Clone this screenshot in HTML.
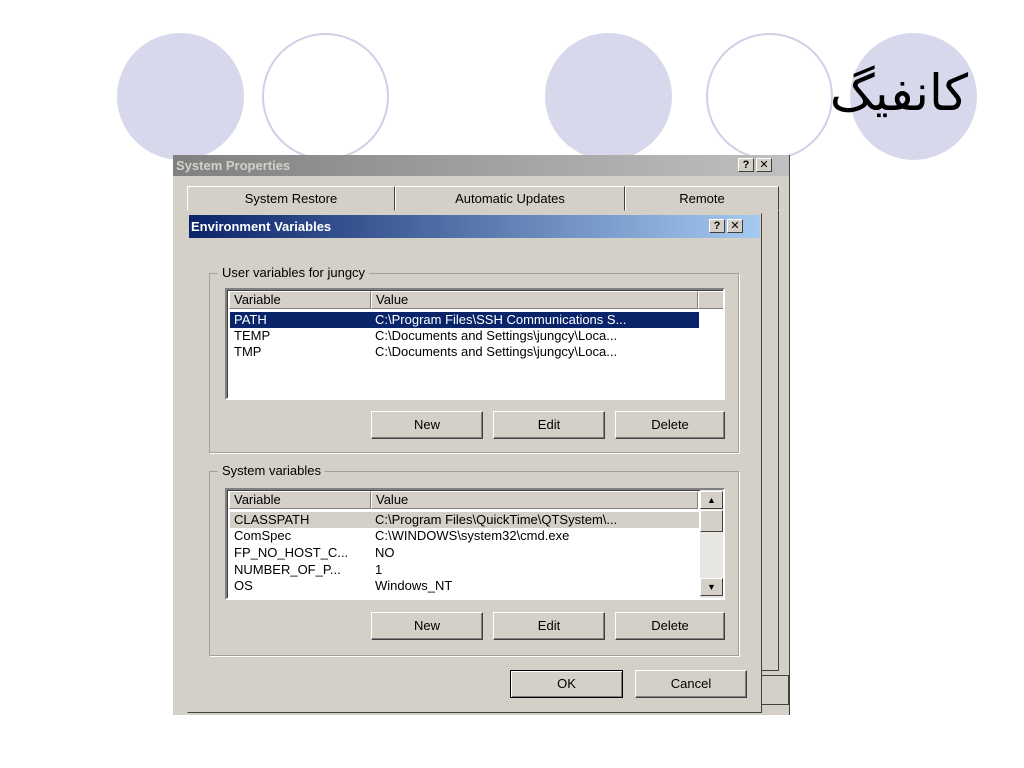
<!DOCTYPE html>
<html><head><meta charset="utf-8"><style>
*{box-sizing:border-box;margin:0;padding:0}
body{width:1024px;height:768px;background:#fff;position:relative;overflow:hidden;font-family:"Liberation Sans","DejaVu Sans",sans-serif;font-size:13px;color:#000}
.a{position:absolute}
.c{position:absolute;border-radius:50%;width:127px;height:127px;top:33px}
.f{background:#d8d8ec}
.o{border:2px solid #cfcfe6;background:#fff}
.btn{position:absolute;background:#d4d0c8;border:1px solid;border-color:#fff #404040 #404040 #fff;box-shadow:inset -1px -1px 0 #808080;text-align:center;line-height:25px;font-size:13px}
.grp{position:absolute;border:1px solid #a0a0a0;box-shadow:1px 1px 0 #fff}
.leg{position:absolute;top:-9px;left:8px;background:#d4d0c8;padding:0 4px;font-size:13px}
.list{position:absolute;background:#fff;border:2px solid;border-color:#808080 #fff #fff #808080;box-shadow:inset 1px 1px 0 #404040;overflow:hidden}
.hd{position:absolute;top:1px;height:18px;background:#d4d0c8;border:1px solid;border-color:#fff #808080 #808080 #fff;padding-left:4px;line-height:16px}
.r{position:absolute;height:16px;line-height:16px;font-size:13px;white-space:nowrap}
.tb{position:absolute;width:16px;height:14px;background:#d4d0c8;border:1px solid;border-color:#fff #404040 #404040 #fff;font-size:11px;font-weight:bold;text-align:center;line-height:12px}
</style></head><body>
<div class="c f" style="left:117px"></div>
<div class="c o" style="left:262px"></div>
<div class="c f" style="left:545px"></div>
<div class="c o" style="left:706px"></div>
<div class="c f" style="left:850px"></div>
<div class="a" style="right:56px;top:58px;font-size:50px;line-height:70px;font-family:'DejaVu Sans',sans-serif;direction:rtl">کانفیگ</div>

<!-- System Properties -->
<div class="a" style="left:173px;top:155px;width:617px;height:560px;background:#d4d0c8;border-right:1px solid #404040">
  <div class="a" style="left:0;top:0;width:616px;height:21px;background:linear-gradient(90deg,#808080,#c0c0c0);color:#d4d0c8;font-weight:bold;line-height:21px;padding-left:3px">System Properties</div>
  <div class="tb" style="left:565px;top:3px">?</div><div class="tb" style="left:583px;top:3px">✕</div>
  <div class="a" style="left:14px;top:31px;width:208px;height:25px;border:1px solid;border-color:#fff #404040 transparent #fff;text-align:center;line-height:24px">System Restore</div>
  <div class="a" style="left:222px;top:31px;width:230px;height:25px;border:1px solid;border-color:#fff #404040 transparent #fff;text-align:center;line-height:24px">Automatic Updates</div>
  <div class="a" style="left:452px;top:31px;width:154px;height:25px;border:1px solid;border-color:#fff #404040 transparent #fff;text-align:center;line-height:24px">Remote</div>
  <div class="a" style="left:588px;top:56px;width:18px;height:460px;border-right:1px solid #404040;border-bottom:1px solid #404040"></div>
  <div class="a" style="left:588px;top:520px;width:28px;height:30px;border:1px solid #404040;border-left:none"></div>
</div>

<!-- Environment Variables -->
<div class="a" style="left:187px;top:213px;width:575px;height:500px;background:#d4d0c8;border:1px solid;border-color:#d4d0c8 #404040 #404040 #d4d0c8">
  <div class="a" style="left:1px;top:1px;width:571px;height:23px;background:linear-gradient(90deg,#0a246a,#a6caf0);color:#fff;font-weight:bold;line-height:23px;padding-left:2px">Environment Variables</div>
  <div class="tb" style="left:521px;top:5px">?</div><div class="tb" style="left:539px;top:5px">✕</div>

  <div class="grp" style="left:21px;top:59px;width:530px;height:180px"><div class="leg">User variables for jungcy</div></div>
  <div class="list" style="left:37px;top:74px;width:500px;height:112px">
    <div class="hd" style="left:2px;width:142px">Variable</div>
    <div class="hd" style="left:144px;width:327px">Value</div>
    <div class="hd" style="left:471px;width:27px"></div>
    <div class="a" style="left:3px;top:22px;width:469px;height:16px;background:#0a246a"></div>
    <div class="r" style="left:7px;top:22px;color:#fff">PATH</div><div class="r" style="left:148px;top:22px;color:#fff">C:\Program Files\SSH Communications S...</div>
    <div class="r" style="left:7px;top:38px">TEMP</div><div class="r" style="left:148px;top:38px">C:\Documents and Settings\jungcy\Loca...</div>
    <div class="r" style="left:7px;top:54px">TMP</div><div class="r" style="left:148px;top:54px">C:\Documents and Settings\jungcy\Loca...</div>
  </div>
  <div class="btn" style="left:183px;top:197px;width:112px;height:28px">New</div>
  <div class="btn" style="left:305px;top:197px;width:112px;height:28px">Edit</div>
  <div class="btn" style="left:427px;top:197px;width:110px;height:28px">Delete</div>

  <div class="grp" style="left:21px;top:257px;width:530px;height:185px"><div class="leg">System variables</div></div>
  <div class="list" style="left:37px;top:274px;width:500px;height:112px">
    <div class="hd" style="left:2px;width:142px">Variable</div>
    <div class="hd" style="left:144px;width:327px">Value</div>
    <div class="a" style="left:473px;top:0;width:24px;height:108px;background:#e8e6e0"></div>
    <div class="tb" style="left:473px;top:1px;width:23px;height:18px;font-size:9px;line-height:16px">▲</div>
    <div class="tb" style="left:473px;top:20px;width:23px;height:22px"></div>
    <div class="tb" style="left:473px;top:88px;width:23px;height:18px;font-size:9px;line-height:16px">▼</div>
    <div class="a" style="left:3px;top:22px;width:469px;height:16px;background:#d4d0c8"></div>
    <div class="r" style="left:7px;top:22px">CLASSPATH</div><div class="r" style="left:148px;top:22px">C:\Program Files\QuickTime\QTSystem\...</div>
    <div class="r" style="left:7px;top:38px">ComSpec</div><div class="r" style="left:148px;top:38px">C:\WINDOWS\system32\cmd.exe</div>
    <div class="r" style="left:7px;top:55px">FP_NO_HOST_C...</div><div class="r" style="left:148px;top:55px">NO</div>
    <div class="r" style="left:7px;top:72px">NUMBER_OF_P...</div><div class="r" style="left:148px;top:72px">1</div>
    <div class="r" style="left:7px;top:88px">OS</div><div class="r" style="left:148px;top:88px">Windows_NT</div>
  </div>
  <div class="btn" style="left:183px;top:398px;width:112px;height:28px">New</div>
  <div class="btn" style="left:305px;top:398px;width:112px;height:28px">Edit</div>
  <div class="btn" style="left:427px;top:398px;width:110px;height:28px">Delete</div>

  <div class="btn" style="left:322px;top:456px;width:113px;height:28px;border-color:#000;box-shadow:inset 1px 1px 0 #fff,inset -1px -1px 0 #808080">OK</div>
  <div class="btn" style="left:447px;top:456px;width:112px;height:28px">Cancel</div>
</div>
</body></html>
